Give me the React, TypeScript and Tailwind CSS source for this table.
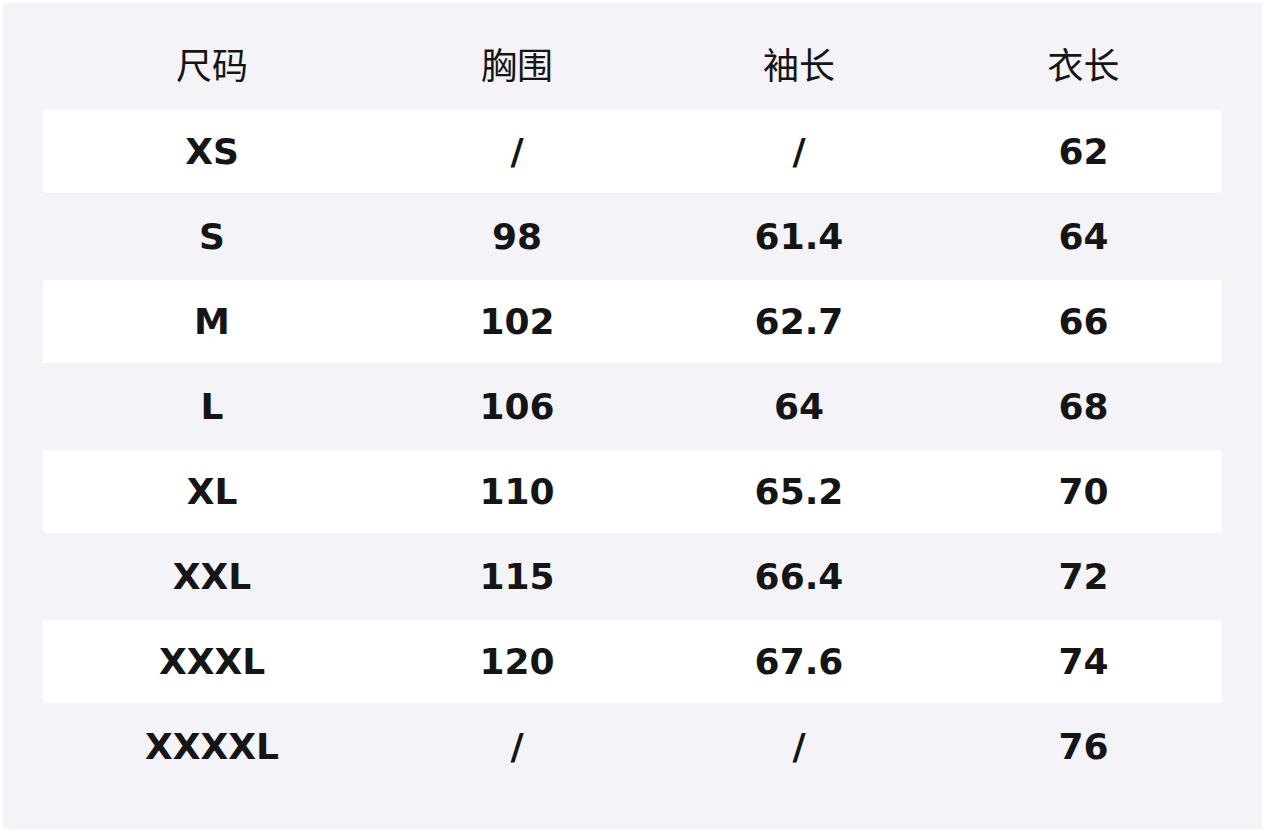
const headers = ["尺码", "胸围", "袖长", "衣长"];

const rows: string[][] = [
  ["XS", "/", "/", "62"],
  ["S", "98", "61.4", "64"],
  ["M", "102", "62.7", "66"],
  ["L", "106", "64", "68"],
  ["XL", "110", "65.2", "70"],
  ["XXL", "115", "66.4", "72"],
  ["XXXL", "120", "67.6", "74"],
  ["XXXXL", "/", "/", "76"],
];

const colWidths = ["w-[338px]", "w-[272px]", "w-[292px]", "w-[277px]"];

export default function App() {
  return (
    <div className="bg-white w-[1266px] h-[833px] pt-[3px] pl-[3px]">
      <div
        className="w-[1259px] h-[826px] bg-[#f3f3f8] px-[40px] pt-[40px] text-[#151515]"
        style={{ fontFamily: '"DejaVu Sans", "Noto Sans CJK SC", sans-serif' }}
      >
        {/* Header */}
        <div className="flex h-[66px] pb-[18px]">
          {headers.map((h, i) => (
            <div key={h} className={`${colWidths[i]} flex items-center justify-center text-[36px] font-normal leading-none`}>
              {h}
            </div>
          ))}
        </div>

        {/* Body */}
        {rows.map((row, r) => (
          <div key={row[0]} className="h-[85px] py-px">
            <div className={`flex h-full rounded-[2px] ${r % 2 === 0 ? "bg-white" : ""}`}>
              {row.map((cell, i) => (
                <div key={i} className={`${colWidths[i]} flex items-center justify-center text-[36px] font-bold leading-none`}>
                  {cell}
                </div>
              ))}
            </div>
          </div>
        ))}
      </div>
    </div>
  );
}
